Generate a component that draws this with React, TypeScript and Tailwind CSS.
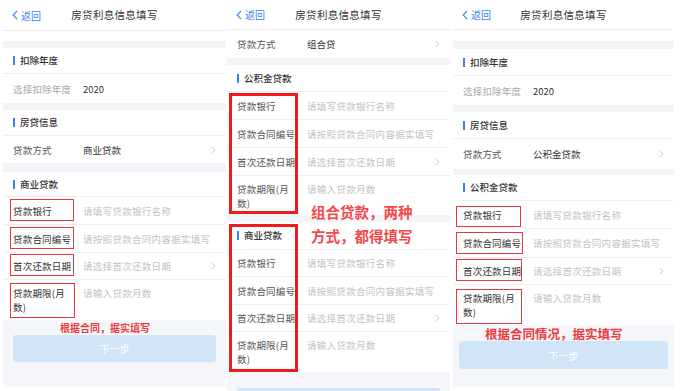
import React from 'react';

const RED = 'border-[#e8383d]';

const Back = () => (
    <div className="flex items-center gap-[3px] text-[#3b86f2] text-[10px]">
        <svg width="6" height="10" viewBox="0 0 6 10">
            <path d="M5 1 L1.2 5 L5 9" stroke="#3b86f2" fill="none" strokeWidth="1.1" />
        </svg>
        <span>返回</span>
    </div>
);

const Header = ({ h = 'h-[31px]' }: { h?: string }) => (
    <div className={`${h} shrink-0 flex items-center border-b border-[#eeeeee] px-[9px]`}>
        <div className="w-[50px] shrink-0"><Back /></div>
        <div className="flex-1 text-center whitespace-nowrap text-[10.5px] text-[#333] tracking-[0.3px]">房贷利息信息填写</div>
        <div className="w-[50px] shrink-0" />
    </div>
);

const Band = ({ h }: { h: string }) => <div className={`${h} shrink-0 bg-[#f2f4f8]`} />;

const Section = ({ title, h }: { title: string; h: string }) => (
    <div className={`${h} shrink-0 flex items-center gap-[5px] border-b border-[#f0f0f0] pl-[10px]`}>
        <span className="w-[2px] h-[9px] bg-[#3b7ff0]" />
        <span className="text-[9.5px] text-[#333] font-medium">{title}</span>
    </div>
);

const Chevron = () => (
    <svg width="5" height="8" viewBox="0 0 5 8" className="ml-auto mr-[10px]">
        <path d="M1 1 L4 4 L1 7" stroke="#c9c9c9" fill="none" strokeWidth="0.9" />
    </svg>
);

interface RowProps {
    label: React.ReactNode;
    value?: string;
    placeholder?: string;
    chevron?: boolean;
    h: string;
    labelColor?: string;
    tall?: boolean;
    box?: string;
    line?: boolean;
}

const Row = ({ label, value, placeholder, chevron, h, labelColor = 'text-[#555]', tall, box, line = true }: RowProps) => (
    <div className={`relative ${h} shrink-0 flex ${tall ? 'items-start pt-[6px]' : 'items-center'} pl-[10px] ${line ? 'border-b border-[#f0f0f0]' : ''}`}>
        <div className={`w-[70px] shrink-0 text-[9.5px] leading-[14px] tracking-[0.2px] ${labelColor}`}>{label}</div>
        {value && <div className="text-[9.5px] text-[#333] leading-[14px]">{value}</div>}
        {placeholder && <div className="text-[9.5px] text-[#c3c3c3] leading-[14px] tracking-[0.3px] whitespace-nowrap">{placeholder}</div>}
        {chevron && <Chevron />}
        {box && <div className={`absolute border-[1.5px] ${RED} ${box}`} />}
    </div>
);

const Term = () => (
    <>
        贷款期限(月<br />数)
    </>
);

const Button = ({ className, label = '下一步' }: { className: string; label?: string }) => (
    <div className={`${className} shrink-0 rounded-[3px] bg-[#d2e5f8] flex items-center justify-center text-[10px] text-white`}>
        {label}
    </div>
);

const PanelOne = () => (
    <div className="w-[223px] shrink-0 flex flex-col overflow-hidden">
        <Header />
        <div className="h-[10px] shrink-0" />
        <Band h="h-[7px]" />
        <Section title="扣除年度" h="h-[26px]" />
        <Row h="h-[29px]" label="选择扣除年度" labelColor="text-[#a8a8a8]" value="2020" line={false} />
        <Band h="h-[7px]" />
        <Section title="房贷信息" h="h-[26px]" />
        <Row h="h-[27px]" label="贷款方式" value="商业贷款" chevron line={false} />
        <Band h="h-[9px]" />
        <Section title="商业贷款" h="h-[25px]" />
        <Row h="h-[28px]" label="贷款银行" labelColor="text-[#333]" placeholder="请填写贷款银行名称" box="left-[7px] top-[2px] w-[64px] h-[22px]" />
        <Row h="h-[28px]" label="贷款合同编号" labelColor="text-[#333]" placeholder="请按照贷款合同内容据实填写" box="left-[7px] top-[2px] w-[64px] h-[22px]" />
        <Row h="h-[27px]" label="首次还款日期" labelColor="text-[#333]" placeholder="请选择首次还款日期" chevron box="left-[7px] top-[1px] w-[64px] h-[22px]" />
        <Row h="h-[40px]" tall label={<Term />} labelColor="text-[#333]" placeholder="请输入贷款月数" line={false} box="left-[7px] top-[3px] w-[65px] h-[35px]" />
        <div className="h-[67px] shrink-0 bg-[#f4f6f9] flex flex-col pt-[1px]">
            <div className="pl-[57px] h-[14px] leading-[14px] text-[10px] font-bold text-[#ec3b40]">根据合同，据实填写</div>
            <Button className="mx-[10px] h-[27px]" />
        </div>
    </div>
);

const PanelTwo = () => (
    <div className="relative w-[223px] shrink-0 flex flex-col overflow-hidden">
        <Header h="h-[30px]" />
        <Row h="h-[28px]" label="贷款方式" value="组合贷" chevron line={false} />
        <Band h="h-[7px]" />
        <Section title="公积金贷款" h="h-[27px]" />
        <div className="relative shrink-0">
            <Row h="h-[28px]" label="贷款银行" placeholder="请填写贷款银行名称" />
            <Row h="h-[28px]" label="贷款合同编号" placeholder="请按照贷款合同内容据实填写" />
            <Row h="h-[28px]" label="首次还款日期" placeholder="请选择首次还款日期" chevron />
            <Row h="h-[39px]" tall label={<Term />} placeholder="请输入贷款月数" line={false} />
            <div className="absolute left-[2px] top-[1px] w-[69px] h-[121px] border-[3px] border-[#f0191c]" />
        </div>
        <Band h="h-[7px]" />
        <div className="relative shrink-0">
            <Section title="商业贷款" h="h-[28px]" />
            <Row h="h-[27px]" label="贷款银行" placeholder="请填写贷款银行名称" />
            <Row h="h-[28px]" label="贷款合同编号" placeholder="请按照贷款合同内容据实填写" />
            <Row h="h-[27px]" label="首次还款日期" placeholder="请选择首次还款日期" chevron />
            <Row h="h-[40px]" tall label={<Term />} placeholder="请输入贷款月数" line={false} />
            <div className="absolute left-[2px] top-[2px] w-[69px] h-[148px] border-[3px] border-[#f0191c]" />
        </div>
        <div className="h-[40px] shrink-0 bg-[#f4f6f9] pt-[16px]">
            <Button className="mx-[10px] h-[27px]" label="" />
        </div>
        <div className="absolute left-[84px] top-[200px] text-[14.5px] leading-[24px] font-bold text-[#f2484c]">
            组合贷款，两种<br />方式，都得填写
        </div>
    </div>
);

const PanelThree = () => (
    <div className="w-[221px] shrink-0 flex flex-col overflow-hidden">
        <Header h="h-[30px]" />
        <div className="h-[11px] shrink-0" />
        <Band h="h-[8px]" />
        <Section title="扣除年度" h="h-[27px]" />
        <Row h="h-[29px]" label="选择扣除年度" labelColor="text-[#a8a8a8]" value="2020" line={false} />
        <Band h="h-[7px]" />
        <Section title="房贷信息" h="h-[27px]" />
        <Row h="h-[30px]" label="贷款方式" value="公积金贷款" chevron line={false} />
        <Band h="h-[6px]" />
        <Section title="公积金贷款" h="h-[26px]" />
        <Row h="h-[28px]" label="贷款银行" labelColor="text-[#333]" placeholder="请填写贷款银行名称" box="left-[3px] top-[5px] w-[65px] h-[21px]" />
        <Row h="h-[29px]" label="贷款合同编号" labelColor="text-[#333]" placeholder="请按照贷款合同内容据实填写" box="left-[3px] top-[3px] w-[67px] h-[22px]" />
        <Row h="h-[27px]" label="首次还款日期" labelColor="text-[#333]" placeholder="请选择首次还款日期" chevron box="left-[3px] top-[1px] w-[66px] h-[22px]" />
        <Row h="h-[40px]" tall label={<Term />} labelColor="text-[#333]" placeholder="请输入贷款月数" line={false} box="left-[3px] top-[4px] w-[66px] h-[35px]" />
        <div className="h-[62px] shrink-0 bg-[#f4f6f9] flex flex-col pt-[2px]">
            <div className="pl-[32px] h-[14px] leading-[14px] text-[12.5px] font-bold text-[#ec3b40]">根据合同情况，据实填写</div>
            <Button className="mx-[6px] h-[28px]" />
        </div>
    </div>
);

export default function App() {
    return (
        <div className="w-[682px] h-[391px] overflow-hidden bg-white flex pl-[3px] gap-[1px] font-['Noto_Sans_CJK_SC','Noto_Sans',sans-serif]">
            <PanelOne />
            <PanelTwo />
            <div className="w-[1px] shrink-0" />
            <PanelThree />
        </div>
    );
}
